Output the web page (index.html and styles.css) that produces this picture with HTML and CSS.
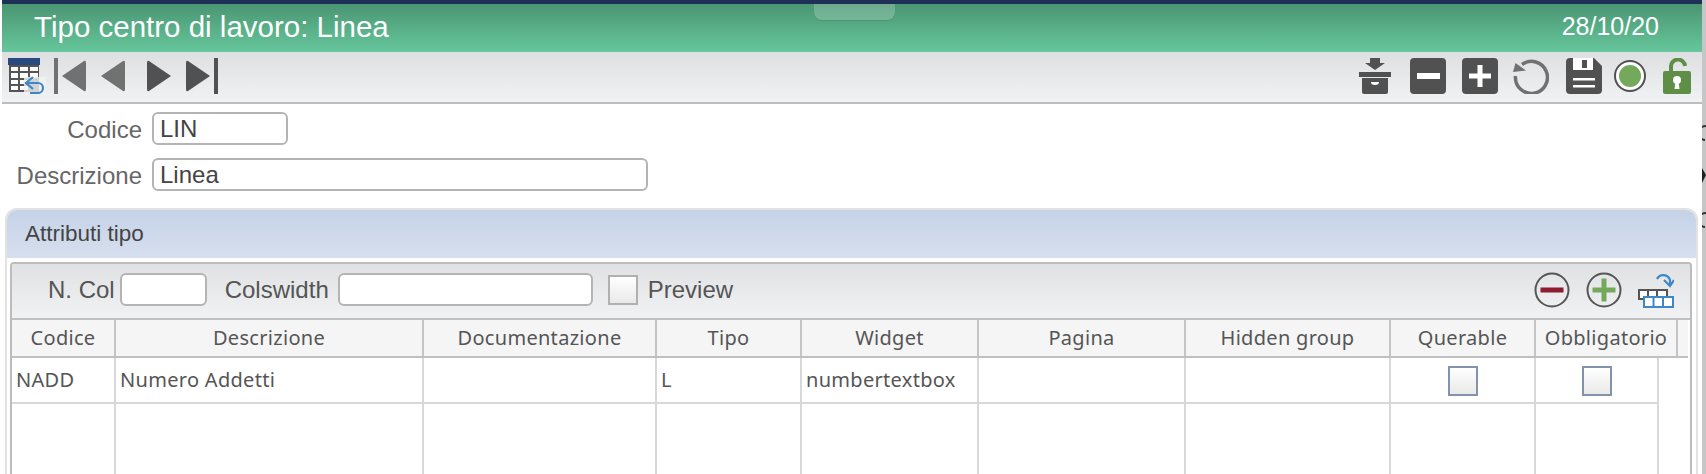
FILE: index.html
```html
<!DOCTYPE html>
<html lang="it">
<head>
<meta charset="utf-8">
<title>Tipo centro di lavoro: Linea</title>
<link rel="stylesheet" href="styles.css">
</head>
<body>
<div class="window">
  <main class="page">
    <div class="topline"></div>
    <header class="titlebar">
      <span class="title">Tipo centro di lavoro: Linea</span>
      <span class="date">28/10/20</span>
      <div class="pull-tab"></div>
    </header>
    <nav class="toolbar">
      <div class="tool-group">
        <svg class="ic ic-table" width="38" height="36" viewBox="0 0 38 36">
          <rect x="0" y="0" width="32" height="7" fill="#284a7e"/>
          <rect x="1" y="7" width="30" height="27" fill="#555"/>
          <g fill="#fff"><rect x="3" y="9" width="7" height="4"/><rect x="12" y="9" width="8" height="4"/><rect x="22" y="9" width="8" height="4"/><rect x="3" y="15" width="7" height="5"/><rect x="12" y="15" width="8" height="5"/><rect x="22" y="15" width="8" height="5"/><rect x="3" y="22" width="7" height="4"/><rect x="12" y="22" width="8" height="4"/><rect x="3" y="28" width="7" height="4"/><rect x="12" y="28" width="8" height="4"/></g>
          <path d="M16 19h22v17H16z" fill="#f0f1f3" opacity=".8"/>
          <path d="M19 25H30a5 5 0 0 1 0 10H22" fill="none" stroke="#3f86c6" stroke-width="2.200"/>
          <path d="M25 19l-7 6 7 6" fill="none" stroke="#3f86c6" stroke-width="2.200"/>
        </svg>
        <svg class="ic ic-first" width="32" height="36" viewBox="0 0 32 36"><rect x="0" y="0" width="4" height="36" fill="#717171"/><path d="M8 18 30 3Q32 2 32 5V31Q32 34 30 33Z" fill="#717171"/></svg>
        <svg class="ic ic-prev" width="26" height="32" viewBox="0 0 26 32"><path d="M1 16 23 1Q25 0 25 3V29Q25 32 23 31Z" fill="#717171"/></svg>
        <svg class="ic ic-next" width="26" height="32" viewBox="0 0 26 32"><path d="M25 16 3 1Q1 0 1 3V29Q1 32 3 31Z" fill="#515151"/></svg>
        <svg class="ic ic-last" width="32" height="36" viewBox="0 0 32 36"><rect x="28" y="0" width="4" height="36" fill="#515151"/><path d="M24 18 2 3Q0 2 0 5V31Q0 34 2 33Z" fill="#515151"/></svg>
      </div>
      <div class="tool-group tool-right">
        <svg class="ic ic-box" width="32" height="36" viewBox="0 0 32 36"><path d="M11 0h10v5h5l-10 7-10-7h5z" fill="#515151"/><rect x="0" y="14" width="32" height="5" fill="#515151"/><path d="M3 20h26v14a2 2 0 0 1-2 2H5a2 2 0 0 1-2-2z" fill="#515151"/><path d="M12 24h8q0 3-4 3t-4-3z" fill="#fff"/></svg>
        <svg class="ic ic-sq" width="36" height="36" viewBox="0 0 36 36"><rect width="36" height="36" rx="4" fill="#515151"/><rect x="7" y="15" width="23" height="6" fill="#fff"/></svg>
        <svg class="ic ic-sq2" width="36" height="36" viewBox="0 0 36 36"><rect width="36" height="36" rx="4" fill="#515151"/><path d="M15.500 7h5v8.500H29v5h-8.500V29h-5v-8.500H7v-5h8.500z" fill="#fff"/></svg>
        <svg class="ic ic-undo" width="36" height="36" viewBox="0 0 36 36"><path d="M9 6.500A16 16 0 1 1 2.500 18" fill="none" stroke="#717171" stroke-width="3.500"/><path d="M2.500 5 0 14 13 12.500z" fill="#717171"/></svg>
        <svg class="ic ic-save" width="36" height="36" viewBox="0 0 36 36"><path d="M4 0H28L36 8V32a4 4 0 0 1-4 4H4a4 4 0 0 1-4-4V4a4 4 0 0 1 4-4z" fill="#515151"/><path d="M7 0h20v12H7z" fill="#fff"/><rect x="16" y="2" width="5" height="8" fill="#515151"/><rect x="7" y="20" width="22" height="2.500" fill="#fff"/><rect x="7" y="27" width="22" height="2.500" fill="#fff"/></svg>
        <svg class="ic ic-radio" width="32" height="32" viewBox="0 0 32 32"><circle cx="16" cy="16" r="15" fill="#fff" stroke="#515151" stroke-width="2"/><circle cx="16" cy="16" r="11" fill="#74a95c"/></svg>
        <svg class="ic ic-lock" width="28" height="36" viewBox="0 0 28 36"><path d="M8 14V9a7 7 0 0 1 14-1" fill="none" stroke="#5f8f47" stroke-width="4"/><rect x="0" y="13" width="28" height="23" rx="2" fill="#5f8f47"/><circle cx="14" cy="22" r="4" fill="#fff"/><path d="M12.500 23h3l1 8h-5z" fill="#fff"/></svg>
      </div>
    </nav>
    <section class="form">
      <div class="form-row">
        <label class="form-label">Codice</label>
        <input class="field field-short" type="text" value="LIN">
      </div>
      <div class="form-row">
        <label class="form-label">Descrizione</label>
        <input class="field field-long" type="text" value="Linea">
      </div>
    </section>
    <section class="panel">
      <h2 class="panel-head">Attributi tipo</h2>
      <div class="grid-box">
        <div class="grid-tools">
          <label class="tl tl-ncol">N. Col</label>
          <input class="field-sm field-ncol" type="text">
          <label class="tl tl-cols">Colswidth</label>
          <input class="field-sm field-cols" type="text">
          <span class="check check-preview"></span>
          <label class="tl tl-prev">Preview</label>
          <span class="spacer"></span>
          <svg class="ic" width="36" height="36" viewBox="0 0 36 36"><circle cx="18" cy="18" r="16.500" fill="none" stroke="#555" stroke-width="2"/><rect x="6.500" y="15.500" width="23" height="5" fill="#8e1b2e"/></svg>
          <svg class="ic ic-add" width="36" height="36" viewBox="0 0 36 36"><circle cx="18" cy="18" r="16.500" fill="none" stroke="#555" stroke-width="2"/><path d="M15.500 6.500h5v9h9v5h-9v9h-5v-9h-9v-5h9z" fill="#74a95c"/></svg>
          <svg class="ic ic-cols" width="36" height="38" viewBox="0 0 36 38">
            <path d="M19 8a7 7 0 0 1 13 1l0 4" fill="none" stroke="#3f86c6" stroke-width="2.200"/>
            <path d="M26 9l6 6 4-6" fill="none" stroke="#3f86c6" stroke-width="2.200"/>
            <path d="M1 19h28v9H1z" fill="#fff" stroke="#555" stroke-width="2"/>
            <path d="M10 19v9M19 19v9" stroke="#555" stroke-width="2"/>
            <path d="M6 26h29v10H6z" fill="#fff" stroke="#3f86c6" stroke-width="2"/>
            <path d="M15.500 26v10M25 26v10" stroke="#3f86c6" stroke-width="2"/>
          </svg>
        </div>
        <div class="grid-row grid-header">
          <div class="cell">Codice</div>
          <div class="cell">Descrizione</div>
          <div class="cell">Documentazione</div>
          <div class="cell">Tipo</div>
          <div class="cell">Widget</div>
          <div class="cell">Pagina</div>
          <div class="cell">Hidden group</div>
          <div class="cell">Querable</div>
          <div class="cell">Obbligatorio</div>
        </div>
        <div class="grid-row grid-data">
          <div class="cell">NADD</div>
          <div class="cell">Numero Addetti</div>
          <div class="cell"></div>
          <div class="cell">L</div>
          <div class="cell">numbertextbox</div>
          <div class="cell"></div>
          <div class="cell"></div>
          <div class="cell cell-c"><span class="check check-blue"></span></div>
          <div class="cell cell-c"><span class="check check-blue"></span></div>
        </div>
        <div class="grid-row grid-empty">
          <div class="cell"></div><div class="cell"></div><div class="cell"></div><div class="cell"></div><div class="cell"></div><div class="cell"></div><div class="cell"></div><div class="cell"></div><div class="cell"></div>
        </div>
      </div>
    </section>
  </main>
  <aside class="edge">
    <svg width="4" height="474" viewBox="0 0 4 474"><path d="M4 126a8 7 0 0 0-2 14" fill="none" stroke="#333" stroke-width="2" transform="translate(1 0)"/><path d="M0 168l4 7-4 8z" fill="#222"/><path d="M4 213a8 7 0 0 0-2 14" fill="none" stroke="#333" stroke-width="2" transform="translate(1 0)"/></svg>
  </aside>
</div>
</body>
</html>
```
FILE: styles.css
```css
* { box-sizing: border-box; }
html, body { margin: 0; height: 100%; background: #fff; overflow: hidden; }
body { font-family: "Liberation Sans", Arial, sans-serif; color: #555; }
.window { display: flex; height: 474px; padding-left: 2px; overflow: hidden; }
.page { width: 1700px; flex: none; height: 474px; overflow: hidden; }
.edge { width: 4px; flex: none; background: #c6c6c6; }
.edge svg { display: block; }

.topline { height: 4px; background: #1f3057; }
.titlebar { position: relative; height: 48px; display: flex; align-items: center; justify-content: space-between; padding: 0 43px 0 32px; background: linear-gradient(#4a9672, #66c69c); color: #fff; }
.title { font-size: 29.500px; line-height: 32px; position: relative; top: -1px; }
.date { font-size: 25px; line-height: 28px; position: relative; top: -2px; }
.pull-tab { position: absolute; left: 812px; top: 0; width: 81px; height: 16px; background: rgba(255,255,255,.2); border-radius: 0 0 8px 8px; box-shadow: 0 1px 1px rgba(0,0,0,.1); }

.toolbar { height: 52px; padding: 6px 11px 0 6px; display: flex; justify-content: space-between; align-items: flex-start; background: linear-gradient(#dedfe1, #f1f2f4); border-bottom: 2px solid #bdbdbd; }
.tool-group { display: flex; align-items: center; height: 36px; }
.ic { display: block; flex: none; }
.ic-first { margin-left: 8px; }
.ic-prev { margin-left: 14px; }
.ic-next { margin-left: 20px; }
.ic-last { margin-left: 14px; }
.ic-sq { margin-left: 19px; }
.ic-sq2 { margin-left: 16px; }
.ic-undo { margin-left: 15px; }
.ic-save { margin-left: 17px; }
.ic-radio { margin-left: 12px; }
.ic-lock { margin-left: 17px; }

.form { height: 104px; padding-top: 8px; }
.form-row { display: flex; align-items: center; height: 33px; margin-bottom: 13px; }
.form-label { width: 140px; text-align: right; font-size: 24px; color: #666; position: relative; top: 1px; }
.field { height: 33px; margin: 0 0 0 10px; padding: 0 6px; border: 2px solid #b4b4b4; border-radius: 6px; font: 24px "Liberation Sans", Arial, sans-serif; color: #444; background: #fff; outline: none; }
.field-short { width: 136px; }
.field-long { width: 496px; }

.panel { margin: 0 0 0 3px; width: 1693px; height: 266px; border: 2px solid #e2e2e2; border-bottom: 0; border-radius: 12px 12px 0 0; padding: 0; overflow: hidden; }
.panel-head { margin: 0; height: 48px; padding: 0 0 0 18px; display: flex; align-items: center; background: linear-gradient(#c5d2e7, #d6dfee); font-size: 22.500px; font-weight: normal; color: #444; }
.grid-box { margin: 4px 0 0 3px; width: 1682px; border: 2px solid #bcbcbc; border-bottom: 0; border-radius: 4px 4px 0 0; height: 220px; overflow: hidden; }
.grid-tools { height: 56px; display: flex; align-items: center; padding: 0 16px 3px 0; background: linear-gradient(#e0e1e3, #f1f2f4); border-bottom: 2px solid #c0c0c0; }
.tl { font-size: 24px; color: #555; }
.tl-ncol { margin-left: 36px; }
.field-sm { height: 33px; padding: 0 4px; border: 2px solid #b4b4b4; border-radius: 6px; background: #fff; outline: none; }
.field-ncol { width: 87px; margin-left: 5px; }
.tl-cols { margin-left: 18px; }
.field-cols { width: 255px; margin-left: 9px; }
.check { display: block; width: 30px; height: 30px; background: linear-gradient(#fff, #e9e9e9); border: 2px solid #b0b0b0; }
.check-preview { margin-left: 15px; }
.check-blue { border-color: #8493ad; }
.tl-prev { margin-left: 10px; }
.spacer { flex: 1; }
.ic-add { margin-left: 16px; }
.ic-cols { margin-left: 16px; }

.grid-row { display: grid; grid-template-columns: 104px 308px 233px 145px 177px 207px 205px 145px 142px; font-family: "Noto Sans", sans-serif; font-size: 20px; letter-spacing: .3px; }
.grid-row .cell { border-right: 2px solid #c4c4c4; display: flex; align-items: center; padding-bottom: 2px; }
.grid-header { height: 38px; width: 1676px; background: #f5f5f5; border-bottom: 2px solid #c0c0c0; }
.grid-header .cell { justify-content: center; color: #555; white-space: nowrap; }
.grid-data, .grid-empty { width: 1647px; grid-template-columns: 104px 308px 233px 145px 177px 207px 205px 145px 123px; background: #fff; }
.grid-data { height: 46px; border-bottom: 2px solid #d8d8d8; }
.grid-data .cell { border-right-color: #d8d8d8; padding-left: 4px; color: #555; }
.grid-data .cell-c { justify-content: center; padding: 2px 0 0; }
.grid-empty { height: 80px; }
.grid-empty .cell { border-right-color: #d8d8d8; }
```
